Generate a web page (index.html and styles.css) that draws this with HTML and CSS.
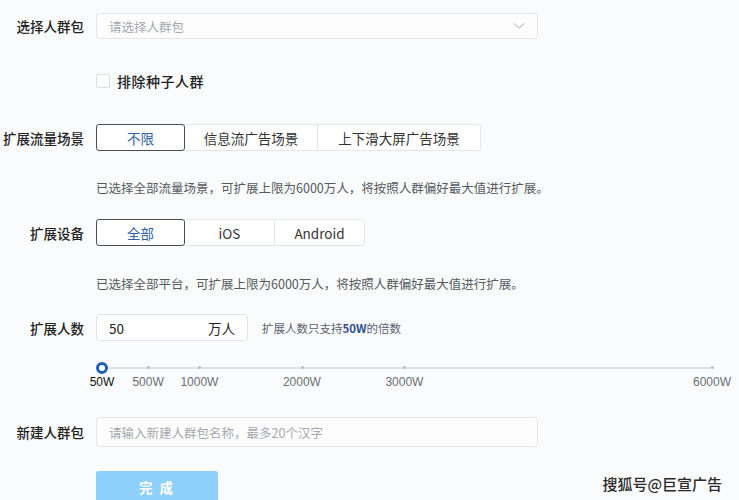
FILE: index.html
```html
<!DOCTYPE html>
<html lang="zh-CN">
<head>
    <meta charset="UTF-8">
    <title>扩展人群包</title>
    <link rel="stylesheet" href="styles.css">
</head>
<body>
    <div class="form">
        <div class="row row-select">
            <label class="label">选择人群包</label>
            <div class="select">
                <span class="placeholder">请选择人群包</span>
                <svg class="chevron" width="12" height="8" viewBox="0 0 12 8"><path d="M1 1.5 L6 6 L11 1.5" fill="none" stroke="#c4c7cc" stroke-width="1.2"/></svg>
            </div>
        </div>

        <div class="row row-check">
            <span class="label"></span>
            <span class="checkbox"></span>
            <span class="check-text">排除种子人群</span>
        </div>

        <div class="row row-scene">
            <label class="label">扩展流量场景</label>
            <div class="segments">
                <button class="seg active" style="width: 89px">不限</button>
                <button class="seg" style="width: 134px">信息流广告场景</button>
                <button class="seg" style="width: 164px">上下滑大屏广告场景</button>
            </div>
        </div>
        <p class="hint hint-scene">已选择全部流量场景，可扩展上限为6000万人，将按照人群偏好最大值进行扩展。</p>

        <div class="row row-device">
            <label class="label">扩展设备</label>
            <div class="segments">
                <button class="seg active" style="width: 89px">全部</button>
                <button class="seg" style="width: 91px">iOS</button>
                <button class="seg" style="width: 91px">Android</button>
            </div>
        </div>
        <p class="hint hint-device">已选择全部平台，可扩展上限为6000万人，将按照人群偏好最大值进行扩展。</p>

        <div class="row row-count">
            <label class="label">扩展人数</label>
            <div class="count-input">
                <span class="count-value">50</span>
                <span class="count-unit">万人</span>
            </div>
            <span class="count-tip">扩展人数只支持<b>50W</b>的倍数</span>
        </div>

        <div class="slider" id="slider">
            <div class="track"></div>
        </div>

        <div class="row row-name">
            <label class="label">新建人群包</label>
            <div class="text-input">
                <span class="placeholder">请输入新建人群包名称，最多20个汉字</span>
            </div>
        </div>

        <div class="row row-submit">
            <span class="label"></span>
            <button class="submit">完 成</button>
        </div>
    </div>

    <div class="watermark">搜狐号@巨宣广告</div>

    <script>
        // 刻度：50W ~ 6000W 线性分布
        const marks = [50, 500, 1000, 2000, 3000, 6000];
        const min = 50, max = 6000;
        const slider = document.getElementById('slider');

        marks.forEach((m, i) => {
            const pct = (m - min) / (max - min) * 100;

            if (i > 0) {
                const dot = document.createElement('span');
                dot.className = 'tick';
                dot.style.left = pct + '%';
                slider.appendChild(dot);
            }

            const text = document.createElement('span');
            text.className = 'mark' + (i === 0 ? ' current' : '');
            text.style.left = pct + '%';
            text.textContent = m + 'W';
            slider.appendChild(text);
        });

        const handle = document.createElement('span');
        handle.className = 'handle';
        handle.style.left = '0%';
        slider.appendChild(handle);
    </script>
</body>
</html>
```

FILE: styles.css
```css
body {
    margin: 0;
    background-color: #fafbfc;
    font-family: "Noto Sans CJK SC", "Liberation Sans", sans-serif;
    color: #333;
    width: 739px;
    height: 500px;
    overflow: hidden;
    position: relative;
}
.form {
    padding-top: 13px;
}
.row {
    display: flex;
    align-items: center;
}
.label {
    width: 84px;
    flex-shrink: 0;
    margin-right: 12px;
    text-align: right;
    font-size: 13.5px;
    font-weight: 500;
    color: #222;
    white-space: nowrap;
}
.select,
.text-input {
    width: 442px;
    box-sizing: border-box;
    border: 1px solid #e3e5e9;
    border-radius: 3px;
    background-color: #fdfdfe;
    display: flex;
    align-items: center;
    justify-content: space-between;
    padding: 0 12px;
}
.select {
    height: 26px;
}
.placeholder {
    font-size: 12.5px;
    color: #a5a8ae;
}
.row-check {
    margin-top: 34px;
    height: 16px;
}
.checkbox {
    width: 14px;
    height: 14px;
    box-sizing: border-box;
    border: 1px solid #dcdfe4;
    border-radius: 2px;
    background-color: #fff;
    margin-right: 7px;
}
.check-text {
    font-size: 14px;
    font-weight: 500;
    letter-spacing: 0.5px;
    color: #222;
}
.row-scene {
    margin-top: 35px;
}
.segments {
    display: flex;
}
.seg {
    height: 27px;
    box-sizing: border-box;
    border: 1px solid #e4e6ea;
    margin-left: -1px;
    background-color: #fff;
    font-family: inherit;
    font-size: 13.5px;
    color: #333;
    padding: 0;
    cursor: pointer;
}
.seg:first-child {
    margin-left: 0;
    border-radius: 3px 0 0 3px;
}
.seg:last-child {
    border-radius: 0 3px 3px 0;
}
.seg.active {
    border-color: #4a4f57;
    color: #2f5fae;
    position: relative;
    z-index: 1;
    border-radius: 3px;
}
.hint {
    margin: 0 0 0 96px;
    font-size: 12.5px;
    line-height: 16px;
    color: #555a60;
}
.hint-scene {
    margin-top: 29px;
}
.row-device {
    margin-top: 23px;
}
.hint-device {
    margin-top: 30px;
}
.row-count {
    margin-top: 22px;
}
.count-input {
    width: 152px;
    height: 27px;
    box-sizing: border-box;
    border: 1px solid #e3e5e9;
    border-radius: 3px;
    background-color: #fff;
    display: flex;
    align-items: center;
    justify-content: space-between;
    padding: 0 12px 0 12px;
    font-size: 13.5px;
    color: #222;
}
.count-tip {
    margin-left: 14px;
    font-size: 11.5px;
    color: #5a6070;
}
.count-tip b {
    color: #2f4f8f;
}
.slider {
    position: relative;
    margin: 20px 0 0 102px;
    width: 610px;
    height: 28px;
}
.track {
    position: absolute;
    left: 0;
    right: 0;
    top: 6px;
    height: 2px;
    background-color: #dfe2e7;
}
.tick {
    position: absolute;
    top: 5px;
    width: 3px;
    height: 3px;
    margin-left: -1px;
    border-radius: 50%;
    background-color: #b8bcc3;
}
.handle {
    position: absolute;
    top: 1px;
    width: 12px;
    height: 12px;
    margin-left: -6px;
    box-sizing: border-box;
    border: 3px solid #1f5fb8;
    border-radius: 50%;
    background-color: #fff;
}
.mark {
    position: absolute;
    top: 14px;
    transform: translateX(-50%);
    font-family: "Liberation Sans", sans-serif;
    font-size: 12px;
    color: #6a6e75;
    white-space: nowrap;
}
.mark.current {
    color: #111;
}
.row-name {
    margin-top: 28px;
}
.text-input {
    height: 30px;
}
.row-submit {
    margin-top: 24px;
}
.submit {
    width: 122px;
    height: 32px;
    border: none;
    border-radius: 3px;
    background-color: #8ed0fb;
    color: #fff;
    font-family: inherit;
    font-size: 13.5px;
    font-weight: bold;
    letter-spacing: 2px;
    cursor: pointer;
}
.watermark {
    position: absolute;
    right: 17px;
    bottom: 6px;
    font-size: 15px;
    font-weight: 500;
    color: #2a2a2a;
}
```
